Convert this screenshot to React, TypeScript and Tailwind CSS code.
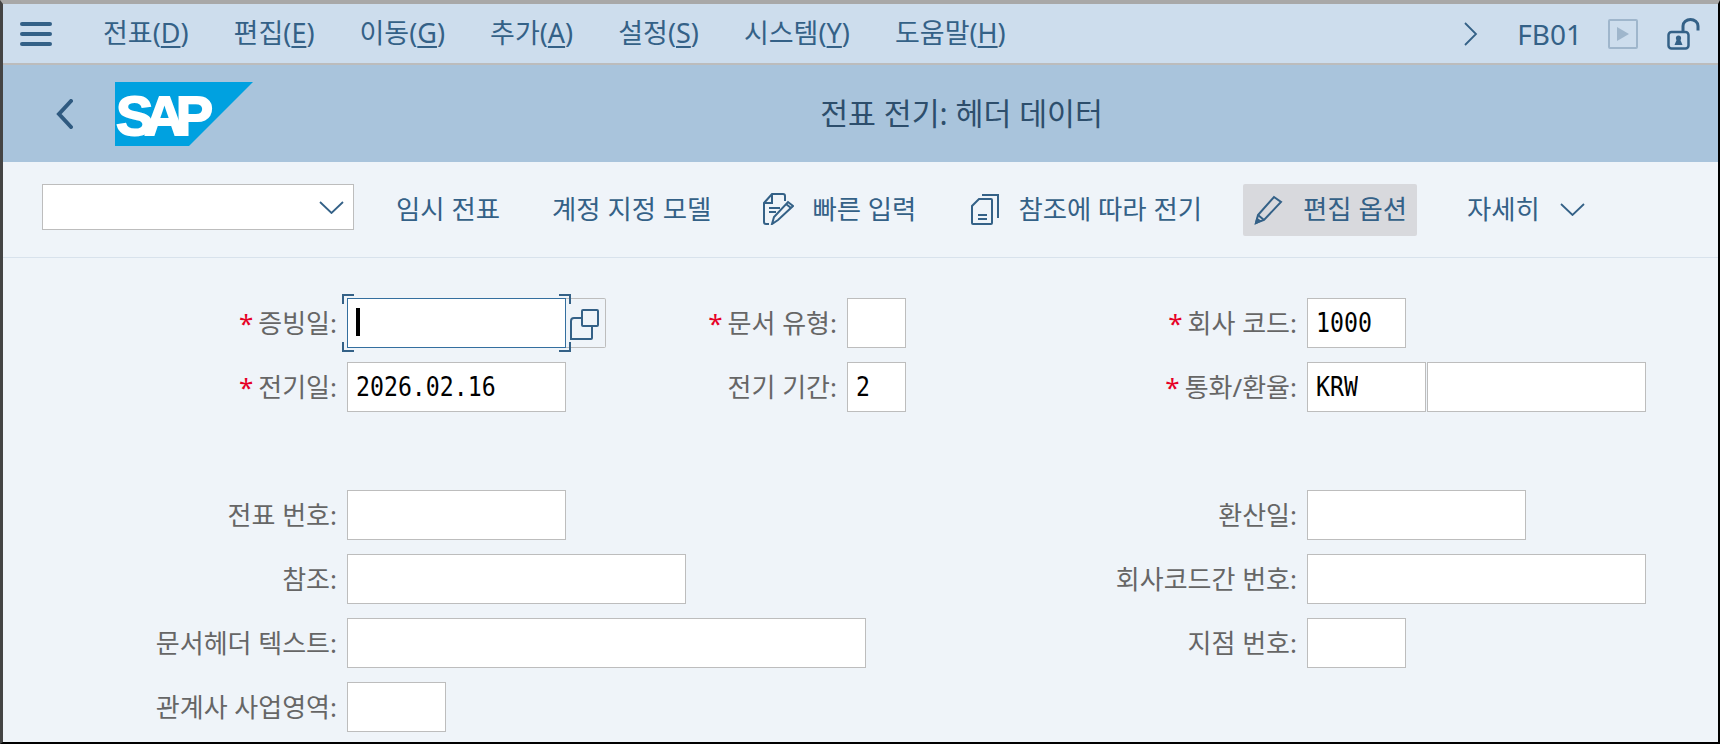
const FONT = 'font-["Noto_Sans","Noto_Sans_CJK_KR",sans-serif]';
const MENUS = [
  ['전표(', 'D'],
  ['편집(', 'E'],
  ['이동(', 'G'],
  ['추가(', 'A'],
  ['설정(', 'S'],
  ['시스템(', 'Y'],
  ['도움말(', 'H'],
];

function Label({ text, required, className }: { text: string; required?: boolean; className?: string }) {
  return (
    <div className={`flex h-[50px] items-center justify-end whitespace-nowrap text-[26px] text-[#666666] ${className ?? ''}`}>
      {required && <span className="mr-[5px] text-[#e60026]">*</span>}
      {text}:
    </div>
  );
}

function Field({ value, className }: { value?: string; className?: string }) {
  return (
    <div className={`flex h-[50px] items-center border border-[#bdbdbd] bg-white pl-[8px] font-["DejaVu_Sans_Mono",monospace] text-[23.2px] text-black ${className ?? ''}`}>
      <span className="inline-block scale-y-[1.17]">{value}</span>
    </div>
  );
}

function Logo() {
  return (
    <svg width="138" height="64" viewBox="0 0 138 64">
      <polygon points="0,0 138,0 74,64 0,64" fill="#00a1e0" />
      <text x="1" y="53" fill="#fff" stroke="#fff" strokeWidth="1.8" fontFamily="Liberation Sans" fontWeight="bold" fontSize="56" textLength="97" lengthAdjust="spacing">SAP</text>
    </svg>
  );
}

function DownChevron({ className }: { className?: string }) {
  return (
    <svg width="25" height="13" viewBox="0 0 25 13" fill="none" stroke="#346187" strokeWidth="1.8" className={className}>
      <path d="M1 1l11.500 11L24 1" />
    </svg>
  );
}

function QuickIcon() {
  return (
    <svg width="31" height="32" viewBox="0 0 31 32" fill="none" stroke="#346187" strokeWidth="2">
      <path d="M22 8V3a2 2 0 0 0-2-2H9L1 10v19a2 2 0 0 0 2 2h3" />
      <path d="M1 10h8V1" />
      <path d="M6 15h11M6 19h7" strokeWidth="1.8" />
      <path d="M9 31l2-7L25 9l5 4-15 14z" />
      <path d="M23 11l5 4" />
    </svg>
  );
}

function CopyDocIcon() {
  return (
    <svg width="28" height="32" viewBox="0 0 28 32" fill="none" stroke="#346187" strokeWidth="2">
      <path d="M11 2h16v23" />
      <path d="M8 6h12a1 1 0 0 1 1 1v23a1 1 0 0 1-1 1H2a1 1 0 0 1-1-1V13z" />
      <path d="M7 22h9M7 26h9" />
    </svg>
  );
}

function PencilIcon() {
  return (
    <svg width="29" height="30" viewBox="0 0 29 30" fill="none" stroke="#346187" strokeWidth="2">
      <path d="M2 28l2-8L20 2l7 5L10 25z" />
      <path d="M4 20l6 5" />
      <path d="M2 28l4-2-3-2z" fill="#346187" />
    </svg>
  );
}

function LockIcon() {
  return (
    <svg width="33" height="32" viewBox="0 0 33 32" fill="none" stroke="#346187">
      <rect x="1.500" y="14" width="20" height="16.500" rx="3" strokeWidth="2.500" />
      <circle cx="11.500" cy="20" r="2.600" fill="#346187" stroke="none" />
      <path d="M7.500 27l2.500-6h3l2.500 6z" fill="#346187" stroke="none" />
      <path d="M16 13V8a7.500 6.500 0 0 1 15 0v4.500" strokeWidth="3" />
    </svg>
  );
}

export default function App() {
  return (
    <div className={`flex h-[744px] w-[1720px] flex-col overflow-hidden border-t-[4px] border-r-2 border-b-2 border-l-[3px] border-t-[#a8a8a8] border-r-black border-b-black border-l-[#444444] bg-[#eff4f9] ${FONT}`}>
      {/* menu bar */}
      <div className="flex h-[61px] shrink-0 items-center border-b-2 border-[#bcbcbc] bg-[#cddded] text-[#346187]">
        <div className="ml-[17px] flex w-[32px] flex-col gap-[6px]">
          <div className="h-[4px] rounded-full bg-[#346187]" />
          <div className="h-[4px] rounded-full bg-[#346187]" />
          <div className="h-[4px] rounded-full bg-[#346187]" />
        </div>
        <div className="ml-[51px] flex gap-[45px] text-[27px]">
          {MENUS.map(([name, key]) => (
            <span key={key}>
              {name}
              <span className="underline underline-offset-[3px]">{key}</span>)
            </span>
          ))}
        </div>
        <div className="ml-auto flex items-center">
          <svg width="14" height="24" viewBox="0 0 14 24" fill="none" stroke="#346187" strokeWidth="1.800">
            <path d="M1 1l11 11L1 23" />
          </svg>
          <span className="ml-[39px] text-[28px]">FB01</span>
          <div className="ml-[26px] flex h-[30px] w-[30px] items-center justify-center rounded-[2px] border-2 border-[#9fb6cc]">
            <div className="h-0 w-0 border-y-[7px] border-l-[12px] border-y-transparent border-l-[#9fb6cc]" />
          </div>
          <div className="mr-[18px] ml-[29px]">
            <LockIcon />
          </div>
        </div>
      </div>

      {/* title bar */}
      <div className="relative flex h-[97px] shrink-0 items-center bg-[#a9c4dc]">
        <svg width="17" height="30" viewBox="0 0 17 30" fill="none" stroke="#2f5a80" strokeWidth="4" strokeLinecap="round" className="ml-[53px]">
          <path d="M15 2L3 15l12 13" />
        </svg>
        <div className="ml-[42px]">
          <Logo />
        </div>
        <div className="absolute inset-x-0 pl-[202px] text-center text-[30.3px] text-[#2d4e6c]">전표 전기: 헤더 데이터</div>
      </div>

      {/* toolbar */}
      <div className="flex h-[96px] shrink-0 items-center border-b border-[#d8e2ec] pl-[39px] text-[26.4px] text-[#346187]">
        <div className="mt-[22px] flex h-[46px] w-[312px] items-center justify-end self-start border border-[#bdbdbd] bg-white pr-[9px]">
          <DownChevron />
        </div>
        <span className="ml-[42px]">임시 전표</span>
        <span className="ml-[52px]">계정 지정 모델</span>
        <div className="ml-[52px] flex items-center gap-[18px]">
          <QuickIcon />
          <span>빠른 입력</span>
        </div>
        <div className="ml-[55px] flex items-center gap-[19px]">
          <CopyDocIcon />
          <span>참조에 따라 전기</span>
        </div>
        <div className="ml-[41px] flex h-[52px] w-[174px] items-center gap-[20px] rounded-[2px] bg-[#d8d9dd] pl-[11px]">
          <PencilIcon />
          <span>편집 옵션</span>
        </div>
        <span className="ml-[50px]">자세히</span>
        <DownChevron className="ml-[20px]" />
      </div>

      {/* form */}
      <div className="grid grid-cols-[334px_300px_180px_260px_180px_1fr] auto-rows-[50px] gap-x-[10px] gap-y-[14px] pt-[40px]">
        <Label text="증빙일" required />
        <div className="flex items-center">
          <div className="relative h-[50px] w-[219px] border border-[#346f9f] bg-white">
            <div className="absolute top-[9px] left-[8px] h-[28px] w-[4px] bg-black" />
            <div className="absolute -top-[5px] -left-[6px] h-[10px] w-[12px] border-t-2 border-l-2 border-[#346187]" />
            <div className="absolute -top-[5px] -right-[6px] h-[10px] w-[12px] border-t-2 border-r-2 border-[#346187]" />
            <div className="absolute -bottom-[5px] -left-[6px] h-[10px] w-[12px] border-b-2 border-l-2 border-[#346187]" />
            <div className="absolute -right-[6px] -bottom-[5px] h-[10px] w-[12px] border-r-2 border-b-2 border-[#346187]" />
          </div>
          <div className="flex h-[50px] w-[40px] justify-start rounded-r-[2px] border border-l-0 border-[#bdbdbd] pt-[10px] pl-[4px]">
            <svg width="29" height="31" viewBox="0 0 29 31" fill="none" stroke="#346187" strokeWidth="2">
              <rect x="12" y="1" width="16" height="16" rx="1" />
              <path d="M12 9H4a3 3 0 0 0-3 3v18h20a1 1 0 0 0 1-1V17" />
            </svg>
          </div>
        </div>
        <Label text="문서 유형" required />
        <Field className="w-[59px]" />
        <Label text="회사 코드" required />
        <Field value="1000" className="w-[99px]" />

        <Label text="전기일" required />
        <Field value="2026.02.16" className="w-[219px]" />
        <Label text="전기 기간" />
        <Field value="2" className="w-[59px]" />
        <Label text="통화/환율" required />
        <div className="flex gap-[1px]">
          <Field value="KRW" className="w-[119px]" />
          <Field className="w-[219px]" />
        </div>

        <div className="col-span-6" />

        <Label text="전표 번호" />
        <Field className="w-[219px]" />
        <div className="col-start-5">
          <Label text="환산일" />
        </div>
        <Field className="w-[219px]" />

        <Label text="참조" />
        <Field className="col-span-3 w-[339px]" />
        <Label text="회사코드간 번호" />
        <Field className="w-[339px]" />

        <Label text="문서헤더 텍스트" />
        <Field className="col-span-3 w-[519px]" />
        <Label text="지점 번호" />
        <Field className="w-[99px]" />

        <Label text="관계사 사업영역" />
        <Field className="w-[99px]" />
      </div>
    </div>
  );
}
